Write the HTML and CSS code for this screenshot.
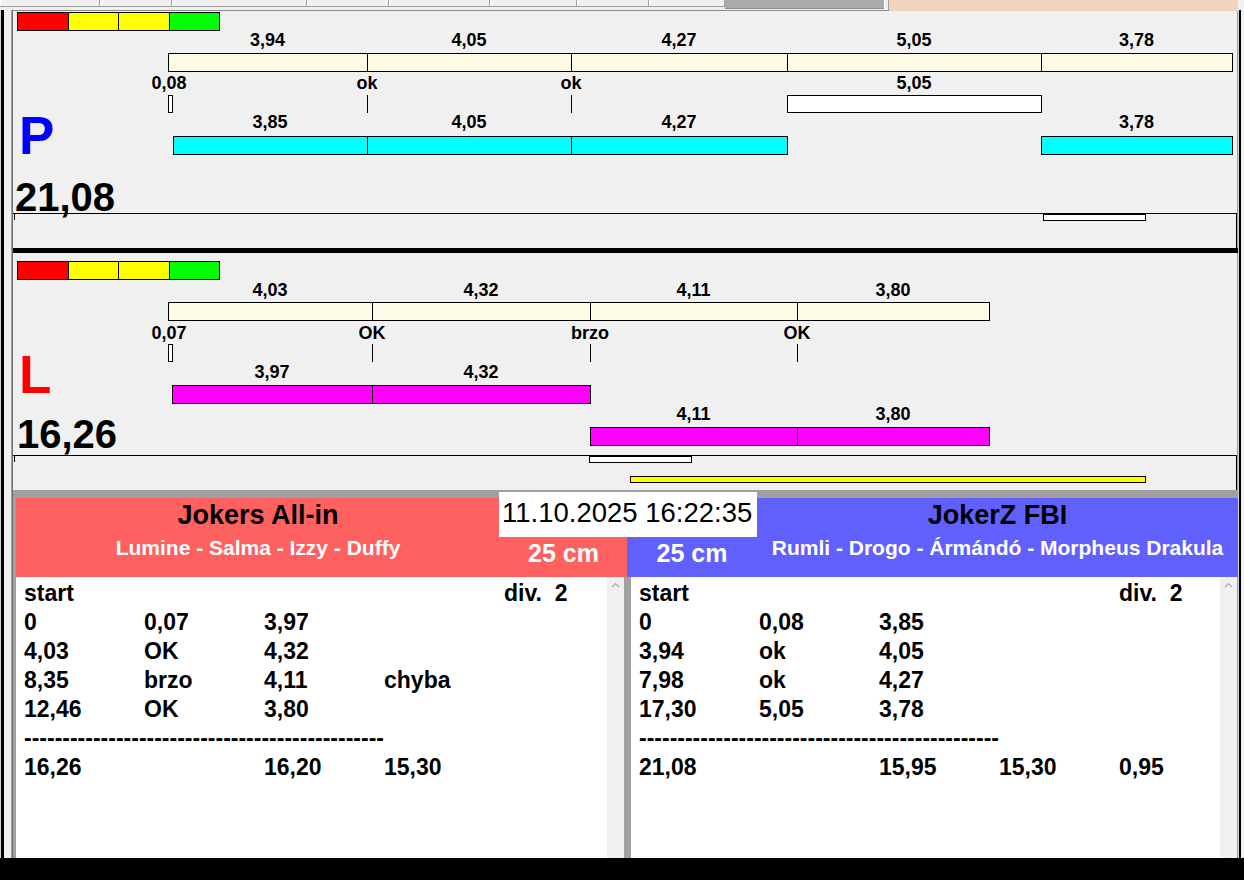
FILE: index.html
```html
<!DOCTYPE html>
<html lang="cs">
<head>
<meta charset="utf-8">
<title>Agility timing</title>
<link rel="stylesheet" href="styles.css">
</head>
<body>
<div class="app">
  <div class="tabbar">
    <div class="tabs">
      <span class="tab t1"></span><span class="tab t2"></span><span class="tab t3"></span><span class="tab t4"></span><span class="tab t5"></span><span class="tab t6"></span><span class="tab t7"></span><span class="tab t8"></span>
    </div>
    <div class="tabs-dark"></div>
    <div class="tabs-gap"></div>
    <div class="tabs-peach"></div>
  </div>

  <div class="shell">
    <div class="edge-l"></div>
    <div class="center">

      <section class="lane lane-p">
        <div class="canvas">
          <div class="colorbar p-cb"><span class="c-red"></span><span class="c-yel"></span><span class="c-yel"></span><span class="c-grn"></span></div>

          <span class="lbl p-a" style="left:254.5px">3,94</span>
          <span class="lbl p-a" style="left:456px">4,05</span>
          <span class="lbl p-a" style="left:666px">4,27</span>
          <span class="lbl p-a" style="left:901px">5,05</span>
          <span class="lbl p-a" style="left:1123.5px">3,78</span>

          <span class="seg cream p-cr" style="left:155px;width:200px"></span>
          <span class="seg cream p-cr" style="left:354px;width:205px"></span>
          <span class="seg cream p-cr" style="left:558px;width:217px"></span>
          <span class="seg cream p-cr" style="left:774px;width:255px"></span>
          <span class="seg cream p-cr" style="left:1028px;width:192px"></span>

          <span class="lbl p-b" style="left:156px">0,08</span>
          <span class="lbl p-b" style="left:354px">ok</span>
          <span class="lbl p-b" style="left:558px">ok</span>
          <span class="lbl p-b" style="left:901px">5,05</span>

          <span class="seg box p-c" style="left:155px;width:5px"></span>
          <span class="tick p-c" style="left:354px"></span>
          <span class="tick p-c" style="left:558px"></span>
          <span class="seg box p-c" style="left:774px;width:255px"></span>

          <span class="lbl p-d" style="left:257px">3,85</span>
          <span class="lbl p-d" style="left:456px">4,05</span>
          <span class="lbl p-d" style="left:666px">4,27</span>
          <span class="lbl p-d" style="left:1123.5px">3,78</span>

          <span class="seg cyan p-cy" style="left:160px;width:195px"></span>
          <span class="seg cyan p-cy" style="left:354px;width:205px"></span>
          <span class="seg cyan p-cy" style="left:558px;width:217px"></span>
          <span class="seg cyan p-cy" style="left:1028px;width:192px"></span>

          <span class="letter letter-p">P</span>
          <span class="total total-p">21,08</span>
        </div>
        <div class="strip">
          <span class="mini" style="left:1030px"></span>
        </div>
      </section>

      <div class="sep"></div>

      <section class="lane lane-l">
        <div class="canvas">
          <div class="colorbar l-cb"><span class="c-red"></span><span class="c-yel"></span><span class="c-yel"></span><span class="c-grn"></span></div>

          <span class="lbl l-a" style="left:257px">4,03</span>
          <span class="lbl l-a" style="left:468px">4,32</span>
          <span class="lbl l-a" style="left:680.5px">4,11</span>
          <span class="lbl l-a" style="left:880px">3,80</span>

          <span class="seg cream l-cr" style="left:155px;width:205px"></span>
          <span class="seg cream l-cr" style="left:359px;width:219px"></span>
          <span class="seg cream l-cr" style="left:577px;width:208px"></span>
          <span class="seg cream l-cr" style="left:784px;width:193px"></span>

          <span class="lbl l-b" style="left:156px">0,07</span>
          <span class="lbl l-b" style="left:359px">OK</span>
          <span class="lbl l-b" style="left:577px">brzo</span>
          <span class="lbl l-b" style="left:784px">OK</span>

          <span class="seg box l-c" style="left:155px;width:5px"></span>
          <span class="tick l-c" style="left:359px"></span>
          <span class="tick l-c" style="left:577px"></span>
          <span class="tick l-c" style="left:784px"></span>

          <span class="lbl l-d" style="left:259px">3,97</span>
          <span class="lbl l-d" style="left:468px">4,32</span>

          <span class="seg mag l-m1" style="left:159px;width:201px"></span>
          <span class="seg mag l-m1" style="left:359px;width:219px"></span>

          <span class="lbl l-e" style="left:680.5px">4,11</span>
          <span class="lbl l-e" style="left:880px">3,80</span>

          <span class="seg mag l-m2" style="left:577px;width:208px"></span>
          <span class="seg mag l-m2" style="left:784px;width:193px"></span>

          <span class="letter letter-l">L</span>
          <span class="total total-l">16,26</span>
        </div>
        <div class="strip">
          <span class="mini" style="left:576px"></span>
          <span class="yel-bar" style="left:617px;width:516px"></span>
        </div>
      </section>

      <section class="bottom">
        <div class="datebox">11.10.2025 16:22:35</div>
        <div class="teams">
          <div class="team team-red">
            <div class="team-main">
              <div class="team-name">Jokers All-in</div>
              <div class="team-players">Lumine - Salma - Izzy - Duffy</div>
            </div>
            <div class="team-side"><span class="cm">25 cm</span></div>
          </div>
          <div class="team team-blue">
            <div class="team-side"><span class="cm">25 cm</span></div>
            <div class="team-main">
              <div class="team-name">JokerZ FBI</div>
              <div class="team-players">Rumli - Drogo - Ármándó - Morpheus Drakula</div>
            </div>
          </div>
        </div>
        <div class="lists">
          <div class="list">
            <div class="row"><span>start</span><span></span><span></span><span></span><span class="pre">div.  2</span></div>
            <div class="row"><span>0</span><span>0,07</span><span>3,97</span></div>
            <div class="row"><span>4,03</span><span>OK</span><span>4,32</span></div>
            <div class="row"><span>8,35</span><span>brzo</span><span>4,11</span><span>chyba</span></div>
            <div class="row"><span>12,46</span><span>OK</span><span>3,80</span></div>
            <div class="row"><span class="dashes">-----------------------------------------------</span></div>
            <div class="row"><span>16,26</span><span></span><span>16,20</span><span>15,30</span></div>
          </div>
          <div class="scroll"><svg class="chev" width="9" height="6" viewBox="0 0 9 6"><polyline points="1,5 4.5,1.5 8,5" fill="none" stroke="#a8a8a8" stroke-width="1.2"/></svg></div>
          <div class="gapcol"></div>
          <div class="list">
            <div class="row"><span>start</span><span></span><span></span><span></span><span class="pre">div.  2</span></div>
            <div class="row"><span>0</span><span>0,08</span><span>3,85</span></div>
            <div class="row"><span>3,94</span><span>ok</span><span>4,05</span></div>
            <div class="row"><span>7,98</span><span>ok</span><span>4,27</span></div>
            <div class="row"><span>17,30</span><span>5,05</span><span>3,78</span></div>
            <div class="row"><span class="dashes">-----------------------------------------------</span></div>
            <div class="row"><span>21,08</span><span></span><span>15,95</span><span>15,30</span><span>0,95</span></div>
          </div>
          <div class="scroll"><svg class="chev" width="9" height="6" viewBox="0 0 9 6"><polyline points="1,5 4.5,1.5 8,5" fill="none" stroke="#a8a8a8" stroke-width="1.2"/></svg></div>
          <div class="gapcol"></div>
        </div>
      </section>

    </div>
    <div class="edge-r"></div>
  </div>

  <div class="footer"></div>
</div>
</body>
</html>
```

FILE: styles.css
```css
* { box-sizing: border-box; }

html, body {
  margin: 0;
  padding: 0;
  width: 1244px;
  height: 880px;
  overflow: hidden;
  background: #f0f0f0;
  font-family: "Liberation Sans", Arial, sans-serif;
}

.app {
  width: 1244px;
  height: 880px;
  display: flex;
  flex-direction: column;
}

/* ---------- top tab strip ---------- */
.tabbar {
  height: 10px;
  display: flex;
  background: #f0f0f0;
  flex: none;
}
.tabs {
  width: 725px;
  display: flex;
  height: 10px;
}
.tab {
  height: 7px;
  border-bottom: 1px solid #a0a0a0;
  border-right: 1px solid #a0a0a0;
  box-shadow: inset 1px 0 0 #ffffff;
  flex: none;
}
.t1 { width: 100px; }
.t2 { width: 72px; }
.t3 { width: 135px; }
.t4 { width: 82px; }
.t5 { width: 101px; }
.t6 { width: 87px; }
.t7 { width: 72px; }
.t8 { width: 76px; }

.tabs-dark {
  width: 159px;
  height: 9px;
  background: #ababab;
  border-bottom: 1px solid #8c8c8c;
}
.tabs-gap {
  width: 5px;
  height: 10px;
  border-left: 1px solid #ffffff;
  border-right: 1px solid #a0a0a0;
}
.tabs-peach {
  width: 349px;
  height: 11px;
  background: #f2d3bb;
  position: relative;
  z-index: 2;
}

/* ---------- frame ---------- */
.shell {
  flex: 1;
  display: flex;
  min-height: 0;
}
.edge-l {
  width: 13px;
  flex: none;
  background: linear-gradient(to right, #d4d4d4 0 1px, #000000 1px 4px, #f0f0f0 4px 11px, #a0a0a0 11px 12px, #6e6e6e 12px 13px);
}
.edge-r {
  width: 6px;
  flex: none;
  background: linear-gradient(to right, #d4d4d4 0 1px, #000000 1px 3px, #f0f0f0 3px 6px);
}
.center {
  width: 1225px;
  display: flex;
  flex-direction: column;
}

/* ---------- lanes ---------- */
.lane {
  background: #f0f0f0;
  border-right: 1px solid #a0a0a0;
}
.lane-p {
  height: 238px;
  border-top: 1px solid #8a8a8a;
}
.lane-l {
  height: 237px;
}
.canvas {
  position: relative;
  height: 202px;
}
.strip {
  position: relative;
  height: 35px;
  border-top: 1px solid #000;
  border-right: 1px solid #000;
}
.strip::before {
  content: "";
  position: absolute;
  left: 1px;
  top: 0;
  width: 1px;
  height: 6px;
  background: #000;
}
.sep {
  height: 5px;
  background: #000;
}

.mini {
  position: absolute;
  top: 0;
  width: 103px;
  height: 7px;
  background: #fff;
  border: 1px solid #000;
}
.yel-bar {
  position: absolute;
  top: 20px;
  height: 7px;
  background: #ffff00;
  border: 1px solid #000;
}

.colorbar {
  position: absolute;
  left: 4px;
  width: 203px;
  height: 19px;
  border: 1px solid #000;
  display: flex;
}
.colorbar span { flex: 1; }
.colorbar span + span { border-left: 1px solid #000; }
.c-red { background: #ff0000; }
.c-yel { background: #ffff00; }
.c-grn { background: #00ff00; }
.p-cb { top: 1px; }
.l-cb { top: 8px; }

.lbl {
  position: absolute;
  font-weight: bold;
  font-size: 18px;
  line-height: 18px;
  color: #000;
  white-space: nowrap;
  transform: translateX(-50%);
}

.seg {
  position: absolute;
  height: 19px;
  border: 1px solid #000;
}
.cream { background: #fffce6; }
.cyan { background: #00ffff; }
.mag { background: #ff00ff; }
.box { background: #ffffff; height: 18px; }
.tick {
  position: absolute;
  width: 1px;
  height: 18px;
  background: #000;
}

/* row positions, lane P */
.p-a { top: 20px; }
.p-cr { top: 42px; }
.p-b { top: 63px; }
.p-c { top: 84px; }
.p-d { top: 102px; }
.p-cy { top: 125px; }

/* row positions, lane L */
.l-a { top: 28px; }
.l-cr { top: 49px; }
.l-b { top: 71px; }
.l-c { top: 91px; }
.l-d { top: 110px; }
.l-m1 { top: 132px; }
.l-e { top: 152px; }
.l-m2 { top: 174px; }

.letter {
  position: absolute;
  left: 6px;
  font-weight: bold;
  font-size: 53px;
  line-height: 53px;
}
.letter-p { top: 98px; color: #0000ff; }
.letter-l { top: 95px; color: #ff0000; }

.total {
  position: absolute;
  font-weight: bold;
  font-size: 40px;
  line-height: 40px;
  color: #000;
  z-index: 1;
}
.total-p { top: 166px; left: 2px; }
.total-l { top: 161px; left: 4px; }

/* ---------- bottom section ---------- */
.bottom {
  position: relative;
  height: 368px;
  background: #a0a0a0;
  padding-top: 8px;
  padding-left: 3px;
}
.datebox {
  position: absolute;
  left: 486px;
  top: 2px;
  width: 258px;
  height: 45px;
  background: #ffffff;
  font-size: 27.5px;
  line-height: 41px;
  padding-left: 3px;
  color: #000;
  white-space: nowrap;
  z-index: 3;
}
.teams {
  display: grid;
  grid-template-columns: 611px 611px;
  height: 79px;
}
.team {
  display: grid;
  height: 79px;
}
.team-red {
  background: #ff6060;
  grid-template-columns: 484px 127px;
}
.team-blue {
  background: #6060ff;
  grid-template-columns: 130px 481px;
}
.team-main {
  text-align: center;
  padding-top: 2px;
  font-weight: bold;
  white-space: nowrap;
}
.team-name {
  font-size: 27px;
  line-height: 30px;
  color: #000;
}
.team-players {
  font-size: 21px;
  line-height: 24px;
  margin-top: 6px;
  color: #ffffff;
}
.team-side {
  text-align: center;
  padding-top: 41px;
}
.cm {
  font-weight: bold;
  font-size: 25px;
  line-height: 28px;
  color: #ffffff;
}

.lists {
  display: grid;
  grid-template-columns: 591px 17px 7px 589px 17px 1px;
  height: 281px;
}
.list {
  background: #ffffff;
  padding: 2px 0 0 8px;
  font-weight: bold;
  font-size: 23px;
  line-height: 29px;
  color: #000;
}
.row {
  display: grid;
  grid-template-columns: repeat(5, 120px);
  height: 29px;
  white-space: nowrap;
}
.pre { white-space: pre; }
.dashes { grid-column: 1 / 6; }
.scroll {
  background: #f0f0f0;
  display: flex;
  justify-content: center;
  padding-top: 5px;
}
.chev { display: block; }
.gapcol { background: #a0a0a0; }

.footer {
  height: 22px;
  background: #000;
  flex: none;
}
```
